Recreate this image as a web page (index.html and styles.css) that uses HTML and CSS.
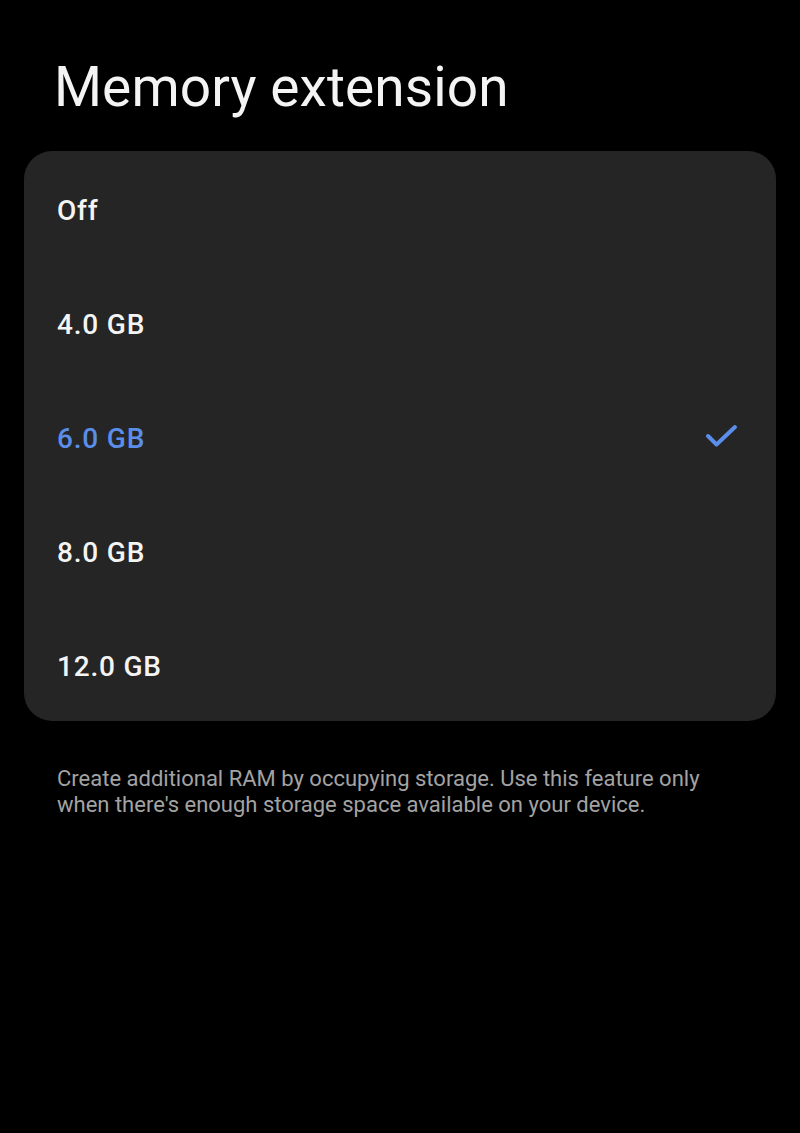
FILE: index.html
```html
<!DOCTYPE html>
<html lang="en">
<head>
<meta charset="UTF-8" />
<meta name="viewport" content="width=device-width, initial-scale=1" />
<title>Memory extension</title>
<link rel="stylesheet" href="styles.css">
</head>
<body>

<h1 class="title">Memory extension</h1>

<div class="card">
  <div class="option">Off</div>
  <div class="option">4.0 GB</div>
  <div class="option selected">
    <span>6.0 GB</span>
    <svg class="check" width="34" height="28" viewBox="0 0 34 28">
      <path d="M4 14 L12.5 22.5 L31 5" fill="none" stroke="#5a8eea" stroke-width="4" stroke-linecap="round" stroke-linejoin="round"/>
    </svg>
  </div>
  <div class="option">8.0 GB</div>
  <div class="option">12.0 GB</div>
</div>

<p class="note">Create additional RAM by occupying storage. Use this feature only when there's enough storage space available on your device.</p>

</body>
</html>
```

FILE: styles.css
```css
body {
  margin: 0;
  background: #000;
  color: #fff;
  font-family: Roboto, "Noto Sans", sans-serif;
}
.title {
  margin: 0;
  padding: 54px 0 0 54px;
  height: 97px;
  font-size: 55px;
  font-weight: 400;
  line-height: 66px;
  letter-spacing: 0.1px;
  color: #f4f4f4;
}
/* liste des choix */
.card {
  margin: 0 24px;
  background: #252525;
  border-radius: 28px;
  overflow: hidden;
}
.option {
  box-sizing: border-box;
  height: 114px;
  display: flex;
  align-items: center;
  justify-content: space-between;
  padding: 4px 38px 0 33px;
  font-size: 28px;
  font-weight: 500;
  letter-spacing: 0.8px;
  color: #f4f4f4;
}
.option.selected {
  color: #5b8ee8;
}
.check {
  display: block;
  margin-top: -4px;
}
.note {
  margin: 0;
  padding: 45px 60px 0 57px;
  font-size: 22px;
  line-height: 26px;
  color: #a3a3a3;
}
```
